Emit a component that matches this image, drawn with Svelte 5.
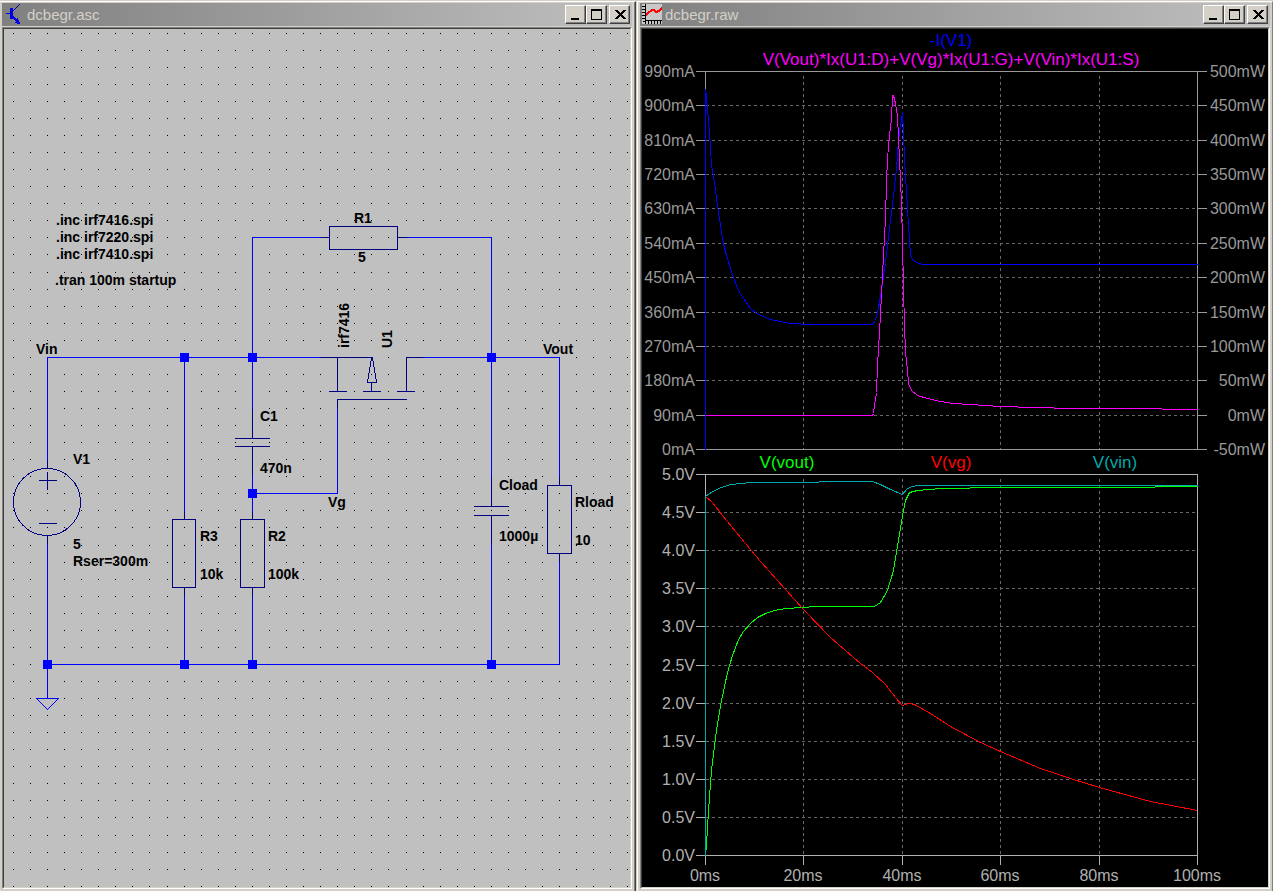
<script lang="ts">
  type Point = [number, number];
  type Label = { text: string; x: number; y: number; up?: boolean };

  let sheetW = $state(626);
  let sheetH = $state(858);
  let plotW = $state(626);
  let plotH = $state(858);

  // ---- schematic ----

  const GRID = 17.06;

  const dots = $derived.by(() => {
    let d = '';
    for (let y = 3.7; y < sheetH; y += GRID) {
      for (let x = 8.9; x < sheetW; x += GRID + 0.01) {
        d += `M${Math.round(x)} ${Math.round(y)}h1v1h-1z`;
      }
    }
    return d;
  });

  const wires = [
    'M47 460V357H321', 'M47 543V698', 'M47 664H559V561',
    'M184 357V512', 'M184 596V664',
    'M321 237H252V409', 'M406 237H491V477',
    'M252 475V512', 'M252 596V664', 'M252 493H337V408',
    'M423 357H559V477', 'M491 544V664',
    'M36 698H58L47 709Z'
  ];

  const symbols = [
    // V1
    'M47 460V468', 'M47 535V543', 'M39 480H56', 'M47 472V489', 'M39 523H56',
    // R3, R2
    'M184 512V519', 'M172 519H195V587H172Z', 'M184 587V596',
    'M252 512V519', 'M240 519H264V587H240Z', 'M252 587V596',
    // R1
    'M321 237H329', 'M329 226H397V249H329Z', 'M397 237H406',
    // C1
    'M252 409V438', 'M235 438H269', 'M235 446H269', 'M252 446V475',
    // U1
    'M321 357H371', 'M337 357V391', 'M329 391H346', 'M363 391H380', 'M397 391H414',
    'M371 357L367 382H376L372 357', 'M371 382V391', 'M406 391V357H423', 'M337 408V399H406',
    // Cload
    'M491 477V506', 'M474 506H508', 'M474 515H508', 'M491 515V544',
    // Rload
    'M559 477V485', 'M547 485H571V553H547Z', 'M559 553V561'
  ];

  const nodes: Point[] = [
    [184, 357], [252, 357], [491, 357], [252, 493],
    [47, 664], [184, 664], [252, 664], [491, 664]
  ];

  const labels: Label[] = [
    { text: '.inc irf7416.spi', x: 56, y: 225 },
    { text: '.inc irf7220.spi', x: 56, y: 242 },
    { text: '.inc irf7410.spi', x: 56, y: 259 },
    { text: '.tran 100m startup', x: 55, y: 285 },
    { text: 'R1', x: 354, y: 223 },
    { text: '5', x: 358, y: 262 },
    { text: 'irf7416', x: 349, y: 348, up: true },
    { text: 'U1', x: 392, y: 348, up: true },
    { text: 'Vin', x: 36, y: 354 },
    { text: 'Vout', x: 543, y: 354 },
    { text: 'C1', x: 260, y: 421 },
    { text: '470n', x: 260, y: 473 },
    { text: 'Vg', x: 328, y: 507 },
    { text: 'V1', x: 73, y: 464 },
    { text: '5', x: 73, y: 549 },
    { text: 'Rser=300m', x: 73, y: 566 },
    { text: 'R3', x: 200, y: 541 },
    { text: '10k', x: 200, y: 579 },
    { text: 'R2', x: 268, y: 541 },
    { text: '100k', x: 268, y: 579 },
    { text: 'Cload', x: 499, y: 490 },
    { text: '1000µ', x: 499, y: 541 },
    { text: 'Rload', x: 575, y: 507 },
    { text: '10', x: 575, y: 545 }
  ];

  // ---- waveforms ----

  const LEFT = 63;
  const RIGHT = 71;
  const TOP = 42;
  const GAP = 25;
  const BOTTOM = 32;

  const innerW = $derived(plotW - LEFT - RIGHT);
  const upperH = $derived(Math.round((plotH - TOP - GAP - BOTTOM) * 0.498));
  const lowerH = $derived(plotH - TOP - GAP - BOTTOM - upperH);
  const lowerTop = $derived(TOP + upperH + GAP);

  const amps = [990, 900, 810, 720, 630, 540, 450, 360, 270, 180, 90, 0].map((v) => `${v}mA`);
  const watts = [500, 450, 400, 350, 300, 250, 200, 150, 100, 50, 0, -50].map((v) => `${v}mW`);
  const volts = [5, 4.5, 4, 3.5, 3, 2.5, 2, 1.5, 1, 0.5, 0].map((v) => `${v.toFixed(1)}V`);
  const times = [0, 20, 40, 60, 80, 100];

  // traces are sampled on a 492 x 378 and a 492 x 381 raster
  const current = '0,378 0,18 1,25 4,61 6,94 9,111 12,134 15,154 18,172 21,184 27,203 32,217 38,227 45,237 51,242 65,248 85,252 105,253 167,253 170,249 173,236 176,219 180,191 182,174 185,149 188,124 191,97 193,69 195,54 197,41 198,61 199,87 201,121 203,154 205,184 208,189 213,192 218,193 492,193';
  const power = '0,344 167,344 168,342 169,334 171,321 172,294 174,261 176,224 177,204 178,184 180,147 181,111 182,87 184,64 186,47 187,24 188,24 190,32 192,44 193,67 194,87 196,131 197,171 198,217 199,254 200,281 202,299 203,312 206,319 212,324 222,327 235,330 248,332 265,333 295,335 330,336 366,337 456,337 457,338 492,338';
  const vin = '0,381 0,22 7,17 16,13 25,10 36,9 45,8 113,8 114,7 167,7 175,10 185,15 197,20 202,14 207,12 212,11 492,11';
  const vg = '0,22 7,28 17,41 35,63 55,87 80,115 98,135 125,163 155,189 167,198 180,210 190,223 197,231 203,229 209,230 225,239 245,252 275,268 295,277 335,294 365,304 394,313 445,327 492,336';
  const vout = '0,381 1,371 3,336 6,296 11,256 15,231 22,198 27,181 33,165 38,157 45,149 52,143 60,139 69,136 80,134 98,133 110,132 169,132 175,128 182,116 188,96 193,66 198,36 200,26 204,18 212,16 235,14 295,13 449,13 450,12 492,12';
</script>

<svelte:head>
  <title>dcbegr</title>
</svelte:head>

{#snippet controls()}
  <div class="controls">
    <button aria-label="Minimize">
      <svg width="17" height="15" viewBox="0 0 17 15"><path d="M4 11h8v2H4z" /></svg>
    </button>
    <button aria-label="Maximize">
      <svg width="17" height="15" viewBox="0 0 17 15">
        <path fill-rule="evenodd" d="M3 2h11v11H3zM4 4v8h9V4z" />
      </svg>
    </button>
    <button class="close" aria-label="Close">
      <svg width="17" height="15" viewBox="0 0 17 15">
        <path d="M4 3h3v1h1v1h1v1h1V5h1V4h1V3h3v1h-1v1h-1v1h-1v1h-1v1h1v1h1v1h1v1h1v1h-3v-1h-1v-1h-1V9H9v1H8v1H7v1H4v-1h1v-1h1V9h1V8h1V7H7V6H6V5H5V4H4z" />
      </svg>
    </button>
  </div>
{/snippet}

<main>
  <section class="window">
    <header>
      <svg class="icon" width="20" height="21" viewBox="0 0 20 21">
        <path fill="#0000e0" d="M2 9h4v1H2zM6 4h3v11H6zM9 6h1v1H9zM10 5h1v1h-1zM11 4h1v1h-1zM14 1h1v1h-1zM15 0h1v1h-1z" />
        <path fill="#000050" d="M12 3h1v1h-1zM13 2h1v1h-1z" />
        <path fill="#0000e0" d="M9 12h1v1h1v1h1v1h1v-1h1v2h1v2h1v2h-3v-1h-2v-1h1v-1h-1v-1h-1v-1H9z" />
      </svg>
      <h2>dcbegr.asc</h2>
      {@render controls()}
    </header>

    <div class="bevel">
      <div class="pane sheet" bind:clientWidth={sheetW} bind:clientHeight={sheetH}>
        <svg class="canvas" role="img" aria-label="Schematic">
          <path class="dots" d={dots} />
          <g class="lines" transform="translate(-3.5 -28.5)">
            <path class="wire" d={wires.join('')} />
            <path class="symbol" d={symbols.join('')} />
            <circle class="symbol" cx="46.5" cy="501.5" r="33.5" />
          </g>
          <g transform="translate(-4 -29)">
            {#each nodes as [x, y]}
              <rect class="node" x={x - 4} y={y - 4} width="9" height="9" />
            {/each}
            {#each labels as l}
              <text x={l.x} y={l.y} transform={l.up ? `rotate(-90 ${l.x} ${l.y})` : undefined}>{l.text}</text>
            {/each}
          </g>
        </svg>
      </div>
    </div>
  </section>

  <section class="window">
    <header>
      <svg class="icon" width="20" height="21" viewBox="0 0 20 21">
        <rect width="20" height="20" fill="#c8c8c8" />
        <path fill="#000" d="M3 0h1v16h16v1H3zM0 2h3v1H0zM0 5h3v1H0zM0 8h3v1H0zM0 11h3v1H0zM0 14h3v1H0zM1 17h2v1H1zM3 17h1v3H3zM6 17h1v3H6zM9 17h1v3H9zM12 17h1v3h-1zM15 17h1v3h-1zM18 17h1v3h-1z" />
        <path fill="none" stroke="#f00" stroke-width="2" d="M4 11C7 9 8 6 11 6S13 9 15 8S18 6 20 4" />
      </svg>
      <h2>dcbegr.raw</h2>
      {@render controls()}
    </header>

    <div class="bevel">
      <div class="pane plots" bind:clientWidth={plotW} bind:clientHeight={plotH}>
        <svg class="canvas" role="img" aria-label="Waveforms">
          <g class="upper">
            <g class="lines" transform="translate(.5 .5)">
              {#each amps as _, i}
                {@const y = TOP + Math.round((upperH * i) / 11)}
                <path class="axis" d="M{LEFT - 9} {y}h9M{LEFT + innerW} {y}h9" />
                {#if i > 0 && i < 11}
                  <path class="grid" d="M{LEFT} {y}h{innerW}" />
                {/if}
              {/each}
              {#each [1, 2, 3, 4] as i}
                <path class="grid" d="M{LEFT + Math.round((innerW * i) / 5)} {TOP + 4}v{upperH - 4}" />
              {/each}
              <rect class="axis" x={LEFT} y={TOP} width={innerW} height={upperH} />
              <svg x={LEFT} y={TOP} width={innerW} height={upperH} viewBox="0 0 492 378" preserveAspectRatio="none">
                <polyline stroke="#0000ff" points={current} />
                <polyline stroke="#ff00ff" points={power} />
              </svg>
            </g>
            {#each amps as label, i}
              <text class="end" x={LEFT - 10} y={TOP + 6 + Math.round((upperH * i) / 11)}>{label}</text>
            {/each}
            {#each watts as label, i}
              <text class="end" x={plotW - 3} y={TOP + 6 + Math.round((upperH * i) / 11)}>{label}</text>
            {/each}
            <text class="trace current" x={LEFT + innerW / 2} y="17">-I(V1)</text>
            <text class="trace power" x={LEFT + innerW / 2} y="36">V(Vout)*Ix(U1:D)+V(Vg)*Ix(U1:G)+V(Vin)*Ix(U1:S)</text>
          </g>

          <g class="lower">
            <g class="lines" transform="translate(.5 .5)">
              {#each volts as _, i}
                {@const y = lowerTop + Math.round((lowerH * i) / 10)}
                <path class="axis" d="M{LEFT - 9} {y}h9" />
                {#if i > 0 && i < 10}
                  <path class="grid" d="M{LEFT} {y}h{innerW}" />
                {/if}
              {/each}
              {#each times as _, i}
                {@const x = LEFT + Math.round((innerW * i) / 5)}
                <path class="axis" d="M{x} {lowerTop + lowerH}v9" />
                {#if i > 0 && i < 5}
                  <path class="grid" d="M{x} {lowerTop + 4}v{lowerH - 4}" />
                {/if}
              {/each}
              <rect class="axis" x={LEFT} y={lowerTop} width={innerW} height={lowerH} />
              <svg x={LEFT} y={lowerTop} width={innerW} height={lowerH} viewBox="0 0 492 381" preserveAspectRatio="none">
                <polyline stroke="#00ff00" points={vout} />
                <polyline stroke="#ff0000" points={vg} />
                <polyline stroke="#00aaaa" points={vin} />
              </svg>
            </g>
            {#each volts as label, i}
              <text class="end" x={LEFT - 10} y={lowerTop + 6 + Math.round((lowerH * i) / 10)}>{label}</text>
            {/each}
            {#each times as t, i}
              <text class="mid" x={LEFT + Math.round((innerW * i) / 5)} y={plotH - 6}>{t}ms</text>
            {/each}
            <text class="trace vout" x={LEFT + innerW / 6} y={lowerTop - 6}>V(vout)</text>
            <text class="trace vg" x={LEFT + innerW / 2} y={lowerTop - 6}>V(vg)</text>
            <text class="trace vin" x={LEFT + (innerW * 5) / 6} y={lowerTop - 6}>V(vin)</text>
          </g>
        </svg>
      </div>
    </div>
  </section>
</main>

<style>
  :global(body) {
    background: #d4d0c8;
    font-family: "Liberation Sans", Arial, sans-serif;
  }

  main {
    display: grid;
    grid-template-columns: 636fr 637fr;
    height: 100vh;
  }

  .window {
    display: flex;
    flex-direction: column;
    min-width: 0;
    box-sizing: border-box;
    margin-top: 1px;
    padding: 1px 2px 2px;
    border-top: 1px solid #fff;
  }
  .window:first-child {
    padding-right: 3px;
    border-right: 1px solid #404040;
    box-shadow: inset -1px 0 #808080;
  }
  .window:last-child {
    margin-left: 1px;
    border-left: 1px solid #fff;
    border-right: 1px solid #808080;
  }

  header {
    display: flex;
    align-items: center;
    gap: 3px;
    flex: none;
    height: 23px;
    margin-bottom: 1px;
    padding: 0 2px;
    background: linear-gradient(to right, #808080, #c0c0c0);
  }
  h2 {
    flex: 1;
    margin: 0;
    font-size: 15px;
    font-weight: 400;
    line-height: 20px;
    color: #d4d0c8;
  }
  .icon {
    flex: none;
    shape-rendering: crispEdges;
  }

  .controls {
    display: flex;
  }
  button {
    display: flex;
    box-sizing: border-box;
    width: 21px;
    height: 19px;
    padding: 1px;
    background: #d4d0c8;
    border: 1px solid;
    border-color: #fff #404040 #404040 #fff;
    box-shadow: inset -1px -1px #808080;
  }
  button svg {
    flex: none;
    shape-rendering: crispEdges;
  }
  .close {
    margin-left: 2px;
  }

  /* sunken edge: outer line on the bevel, inner line on the pane */
  .bevel {
    display: flex;
    flex: 1;
    min-height: 0;
    border: 1px solid;
    border-color: #808080 #fff #fff #808080;
  }
  .pane {
    flex: 1;
    min-width: 0;
    border: 1px solid;
    border-color: #404040 #d4d0c8 #d4d0c8 #404040;
    overflow: hidden;
  }
  .sheet {
    background: #c0c0c0;
  }
  .plots {
    background: #000;
  }

  .canvas {
    display: block;
    width: 100%;
    height: 100%;
  }
  .lines,
  .dots {
    shape-rendering: crispEdges;
  }
  .wire,
  .symbol {
    fill: none;
    stroke: #0000ff;
    stroke-linecap: square;
  }
  .symbol {
    stroke: #000080;
  }
  .node {
    fill: #0000ff;
  }
  .sheet text {
    font-size: 14px;
    font-weight: 700;
  }

  .lines svg {
    overflow: visible;
  }
  .axis {
    fill: none;
    stroke: #999;
    stroke-linecap: square;
  }
  .lower .axis {
    stroke: #b0b0b0;
  }
  .grid {
    stroke: #686868;
    stroke-dasharray: 3 3;
  }
  polyline {
    fill: none;
    vector-effect: non-scaling-stroke;
  }
  .plots text {
    font-size: 16px;
    fill: #999;
  }
  .plots .lower text {
    fill: #b0b0b0;
  }
  .end {
    text-anchor: end;
  }
  .mid,
  .trace {
    text-anchor: middle;
  }
  .plots .trace {
    font-size: 17px;
  }
  .plots .current {
    fill: #0000ff;
  }
  .plots .power {
    fill: #ff00ff;
  }
  .plots .lower .vout {
    fill: #00ff00;
  }
  .plots .lower .vg {
    fill: #ff0000;
  }
  .plots .lower .vin {
    fill: #00aaaa;
  }
</style>
